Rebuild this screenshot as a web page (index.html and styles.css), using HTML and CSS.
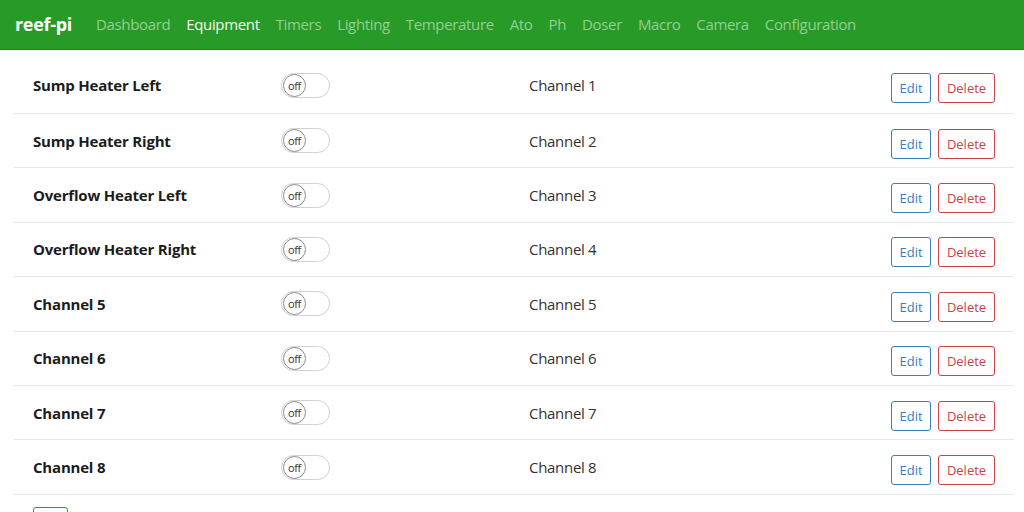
FILE: index.html
```html
<!DOCTYPE html>
<html>
<head>
<meta charset="utf-8">
<title>reef-pi</title>
<link rel="stylesheet" href="styles.css">
</head>
<body>
<nav class="navbar">
  <span class="brand">reef-pi</span>
  <ul class="nav">
    <li>Dashboard</li>
    <li class="active">Equipment</li>
    <li>Timers</li>
    <li>Lighting</li>
    <li>Temperature</li>
    <li>Ato</li>
    <li>Ph</li>
    <li>Doser</li>
    <li>Macro</li>
    <li>Camera</li>
    <li>Configuration</li>
  </ul>
</nav>
<main class="content">
  <ul class="equipment-list">
    <li class="item"><span class="name">Sump Heater Left</span><span class="switch"><span class="knob">off</span></span><span class="outlet">Channel 1</span><span class="actions"><button class="btn edit">Edit</button><button class="btn delete">Delete</button></span></li>
    <li class="item"><span class="name">Sump Heater Right</span><span class="switch"><span class="knob">off</span></span><span class="outlet">Channel 2</span><span class="actions"><button class="btn edit">Edit</button><button class="btn delete">Delete</button></span></li>
    <li class="item"><span class="name">Overflow Heater Left</span><span class="switch"><span class="knob">off</span></span><span class="outlet">Channel 3</span><span class="actions"><button class="btn edit">Edit</button><button class="btn delete">Delete</button></span></li>
    <li class="item"><span class="name">Overflow Heater Right</span><span class="switch"><span class="knob">off</span></span><span class="outlet">Channel 4</span><span class="actions"><button class="btn edit">Edit</button><button class="btn delete">Delete</button></span></li>
    <li class="item"><span class="name">Channel 5</span><span class="switch"><span class="knob">off</span></span><span class="outlet">Channel 5</span><span class="actions"><button class="btn edit">Edit</button><button class="btn delete">Delete</button></span></li>
    <li class="item"><span class="name">Channel 6</span><span class="switch"><span class="knob">off</span></span><span class="outlet">Channel 6</span><span class="actions"><button class="btn edit">Edit</button><button class="btn delete">Delete</button></span></li>
    <li class="item"><span class="name">Channel 7</span><span class="switch"><span class="knob">off</span></span><span class="outlet">Channel 7</span><span class="actions"><button class="btn edit">Edit</button><button class="btn delete">Delete</button></span></li>
    <li class="item"><span class="name">Channel 8</span><span class="switch"><span class="knob">off</span></span><span class="outlet">Channel 8</span><span class="actions"><button class="btn edit">Edit</button><button class="btn delete">Delete</button></span></li>
  </ul>
  <div class="add-row"><button class="btn add">+</button></div>
</main>
</body>
</html>
```

FILE: styles.css
```css
html, body {
  margin: 0;
  padding: 0;
  background: #fff;
  font-family: "Open Sans", "Noto Sans", sans-serif;
  color: #222;
}

.navbar {
  display: flex;
  align-items: center;
  height: 50px;
  box-sizing: border-box;
  padding: 0 15px 1px;
  background: #289a28;
  border-bottom: 1px solid #1f7f22;
}

.brand {
  color: #fff;
  font-weight: 700;
  font-size: 18px;
  letter-spacing: -0.3px;
  margin-right: 24px;
}

.nav {
  display: flex;
  list-style: none;
  margin: 0;
  padding: 0;
  gap: 16px;
}

.nav li {
  color: #93cf93;
  font-size: 15px;
  letter-spacing: -0.35px;
}

.nav li.active {
  color: #f4fbf2;
}

.content {
  padding: 7px 10px 0 14px;
}

.equipment-list {
  list-style: none;
  margin: 0;
  padding: 0;
}

.item {
  display: grid;
  grid-template-columns: 248px 248px 1fr auto;
  align-items: center;
  height: 53.4px;
  padding: 0 19px;
  border-bottom: 1px solid #e6e6e6;
  font-size: 15px;
}

.item:first-child {
  height: 56px;
}

.name {
  font-weight: 700;
  color: #1c1c1c;
  letter-spacing: -0.2px;
}

.outlet {
  color: #333;
  letter-spacing: -0.3px;
}

.switch {
  display: flex;
  align-items: center;
  width: 47px;
  height: 23px;
  border: 1px solid #d0d0d0;
  border-radius: 13px;
  box-sizing: content-box;
}

.knob {
  display: flex;
  align-items: center;
  justify-content: center;
  width: 21px;
  height: 21px;
  margin-left: 1px;
  border: 1.5px solid #8a8a8a;
  border-radius: 50%;
  font-size: 11px;
  color: #333;
  letter-spacing: -0.4px;
  background: #fff;
}

.actions {
  display: flex;
  gap: 7px;
  margin-top: 6px;
}

.btn {
  font-family: inherit;
  font-size: 13px;
  height: 30px;
  padding: 0 7px;
  background: #fff;
  border-radius: 3px;
  border: 1px solid;
  cursor: pointer;
}

.btn.edit {
  color: #3a7dbd;
  border-color: #3a7dbd;
  width: 40px;
}

.btn.delete {
  color: #c9424a;
  border-color: #c9424a;
  width: 57px;
}

.add-row {
  padding: 12px 0 0 19px;
}

.btn.add {
  width: 35px;
  height: 30px;
  color: #2b9a2b;
  border-color: #2b9a2b;
}
```
